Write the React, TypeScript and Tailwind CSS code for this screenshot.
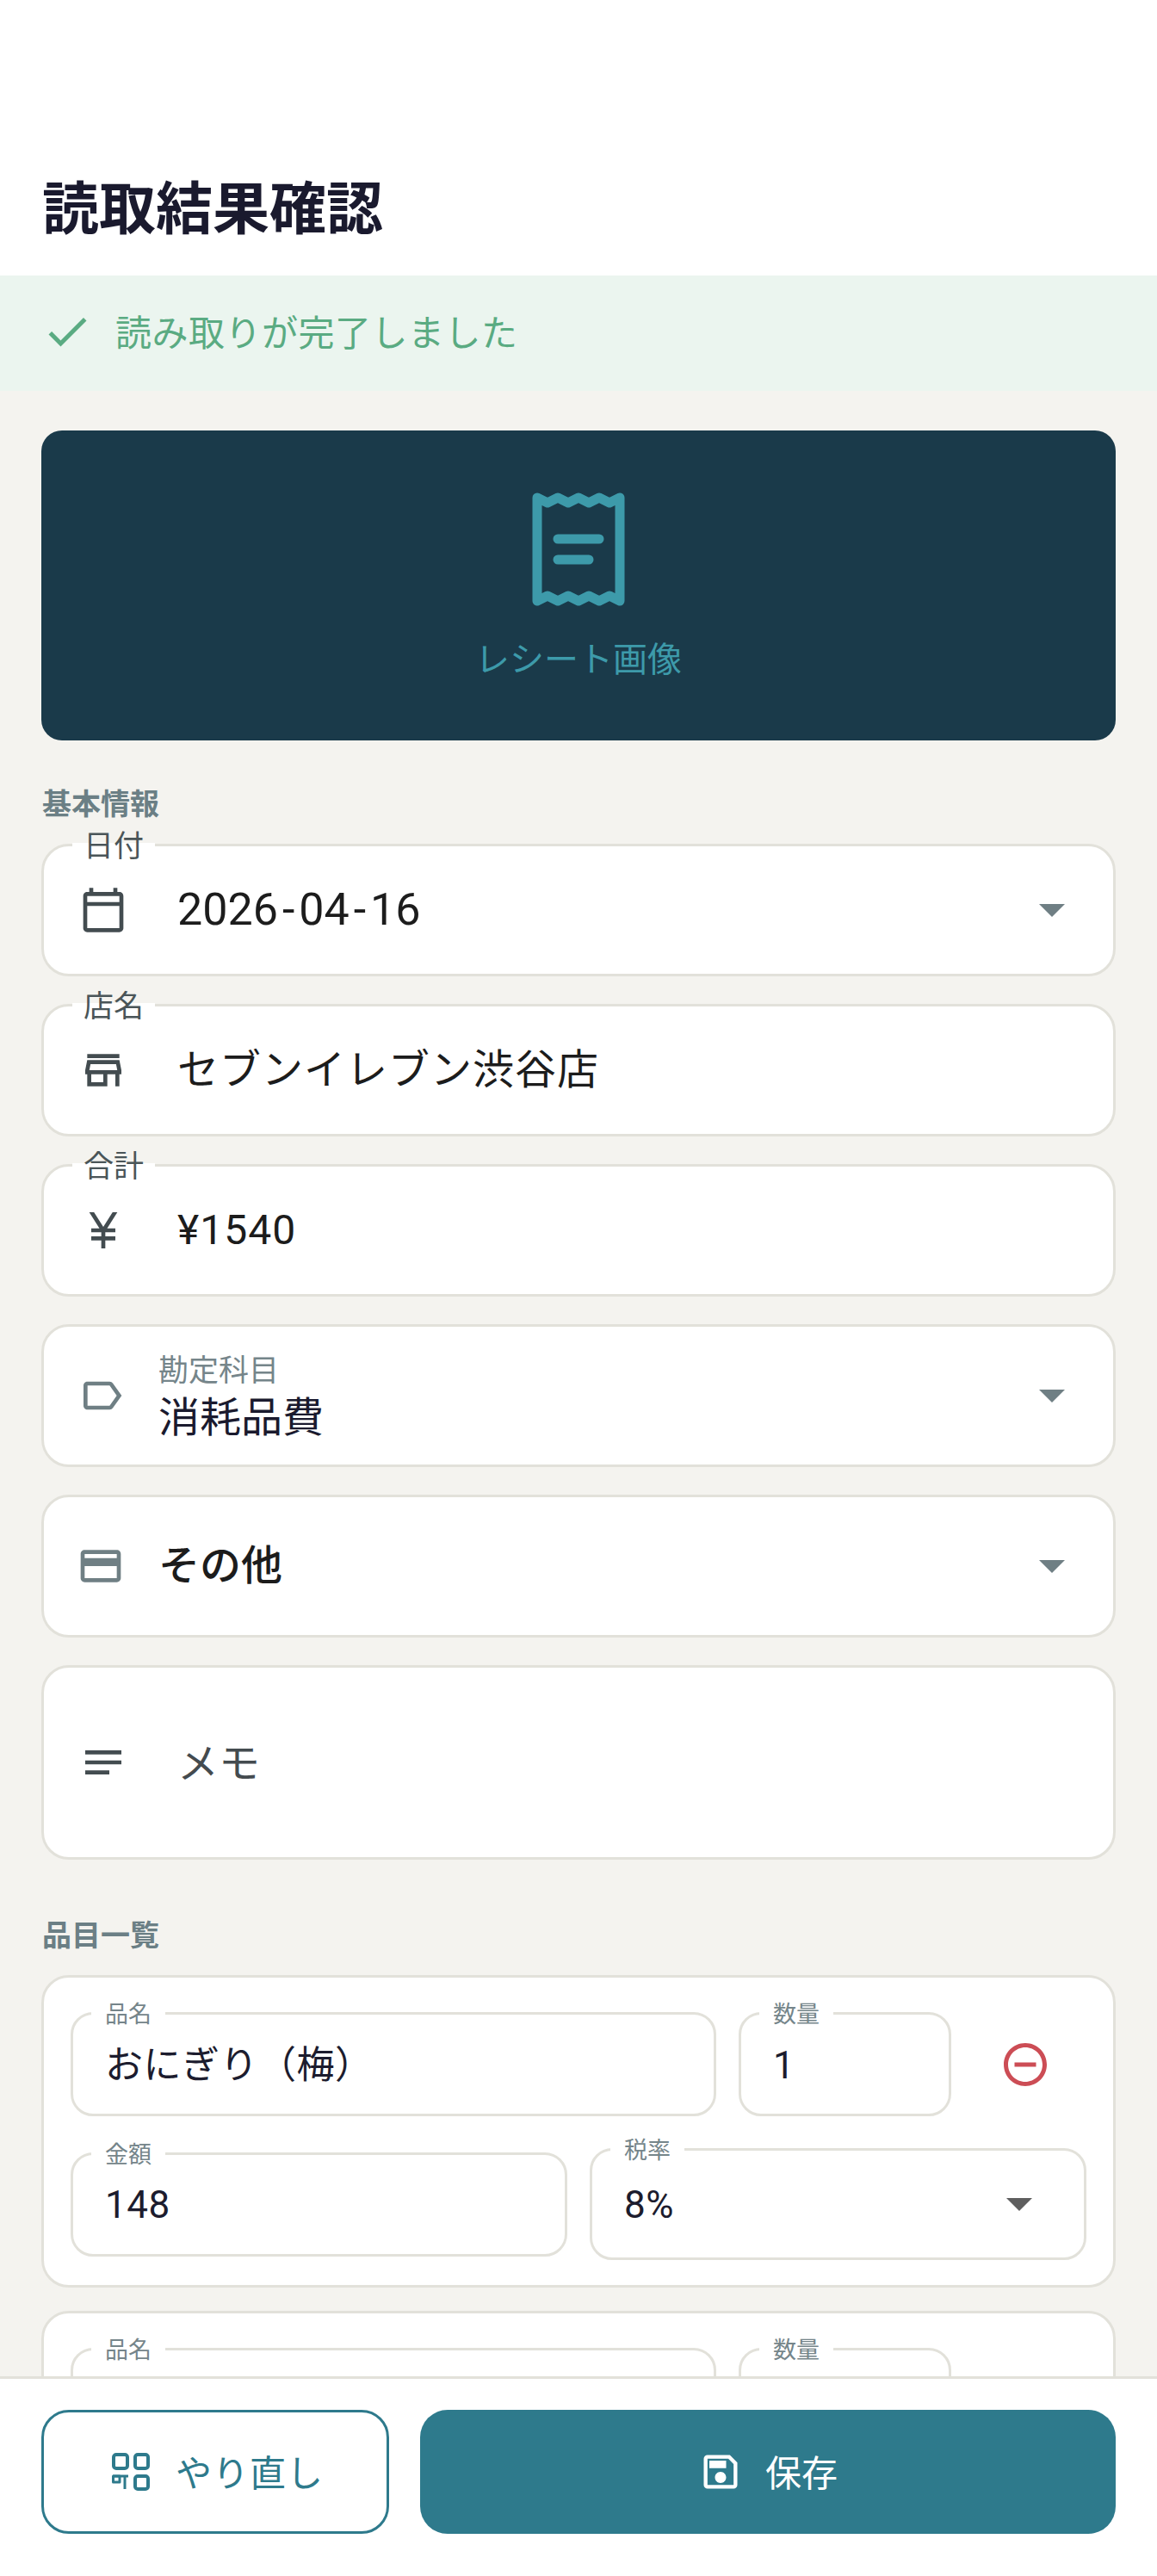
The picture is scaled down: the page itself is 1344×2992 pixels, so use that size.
import React from "react";
import {
  MdCheck,
  MdOutlineCalendarToday,
  MdOutlineStore,
  MdOutlineCurrencyYen,
  MdOutlineLabel,
  MdOutlineCreditCard,
  MdNotes,
  MdOutlineRemoveCircleOutline,
  MdOutlineSave,
} from "react-icons/md";

const Caret = ({ className }: { className: string }) => (
  <svg viewBox="0 0 30 15" className={className} fill="currentColor">
    <polygon points="0,0 30,0 15,15" />
  </svg>
);

const ReceiptIcon = () => (
  <svg viewBox="0 0 108 132" className="w-[108px] h-[132px] text-[#3d9aaa]" fill="none" stroke="currentColor" strokeWidth="11" strokeLinejoin="round" strokeLinecap="round">
    <path d="M6 6 L18 12 L30 6 L42 12 L54 6 L66 12 L78 6 L90 12 L102 6 V126 L90 120 L78 126 L66 120 L54 126 L42 120 L30 126 L18 120 L6 126 Z" />
    <path d="M30 54 H78" />
    <path d="M30 78 H66" />
  </svg>
);

const RetryIcon = () => (
  <svg viewBox="0 0 44 44" className="w-[44px] h-[44px]" fill="none" stroke="currentColor" strokeWidth="4" strokeLinejoin="round">
    <rect x="2" y="2" width="16" height="16" rx="3" />
    <rect x="27" y="2" width="15" height="16" rx="3" />
    <rect x="27" y="27" width="15" height="15" rx="3" />
    <path d="M1 27 H19 M15 27 V42" strokeWidth="3" />
    <rect x="1.5" y="27" width="7.5" height="7" strokeWidth="3" />
  </svg>
);

// outlined field with its label sitting on the top border
const Field = ({ label, icon, value, caret }: { label: string; icon: React.ReactNode; value: React.ReactNode; caret?: boolean }) => (
  <div className="relative h-[154px] rounded-[32px] border-[3px] border-[#e2e1da] bg-white flex items-center pl-[41px] pr-[56px]">
    <span className="absolute left-[33px] top-[-22px] h-[46px] px-[13px] flex items-center text-[35px] leading-[46px] text-[#4a5558] bg-[linear-gradient(to_bottom,transparent_40%,white_40%)]">
      {label}
    </span>
    <span className="w-[56px] flex justify-center text-[#434c50]">{icon}</span>
    <span className="ml-[58px] flex-1 text-[48px] tracking-[1px] text-[#1c1c1c]">{value}</span>
    {caret && <Caret className="w-[30px] h-[15px] text-[#6f7f84]" />}
  </div>
);

const SmallField = ({ label, value, className, caret }: { label: string; value: string; className: string; caret?: boolean }) => (
  <div className={`relative rounded-[26px] border-[3px] border-[#e2e1da] bg-white flex items-center pl-[37px] pr-[60px] ${className}`}>
    <span className="absolute left-[21px] top-[-18px] h-[36px] px-[16px] bg-white text-[27px] leading-[36px] text-[#75858a]">{label}</span>
    <span className="flex-1 pt-[2px] text-[44px] tracking-[0.5px] text-[#1c1c2e]">{value}</span>
    {caret && <Caret className="w-[30px] h-[15px] text-[#5f5f5f]" />}
  </div>
);

export default function App() {
  return (
    <div className="w-[1344px] h-[2992px] overflow-hidden flex flex-col bg-[#f4f3ef] font-['Roboto','Noto_Sans_CJK_JP',sans-serif]">
      <header className="h-[320px] shrink-0 bg-white flex items-end pb-[36px] pl-[49px]">
        <h1 className="text-[66px] leading-[80px] font-bold text-[#1a1a2e]">読取結果確認</h1>
      </header>

      <div className="h-[134px] shrink-0 bg-[#ebf5ef] flex items-center pl-[48px] text-[#5aab82]">
        <span className="-mt-[4px]"><MdCheck size={60} /></span>
        <span className="ml-[26px] text-[42px] tracking-[0.5px]">読み取りが完了しました</span>
      </div>

      <main className="flex-1 min-h-0 overflow-hidden px-[48px] pt-[46px]">
        <div className="h-[360px] rounded-[24px] bg-[#1a3a4a] flex flex-col items-center pt-[72px]">
          <ReceiptIcon />
          <span className="mt-[38px] text-[40px] leading-[50px] text-[#3d9aaa]">レシート画像</span>
        </div>

        <h2 className="mt-[52px] text-[34px] leading-[44px] font-bold text-[#6b7f85] pl-[1px]">基本情報</h2>

        <div className="mt-[24px] flex flex-col gap-[32px]">
          <Field
            label="日付"
            icon={<MdOutlineCalendarToday size={58} />}
            caret
            value={
              <span className="text-[52px] tracking-[0px]">
                2026<span className="mx-[5px]">-</span>04<span className="mx-[5px]">-</span>16
              </span>
            }
          />
          <Field label="店名" icon={<MdOutlineStore size={58} />} value="セブンイレブン渋谷店" />
          <Field label="合計" icon={<MdOutlineCurrencyYen size={62} />} value="¥1540" />

          <div className="h-[166px] rounded-[32px] border-[3px] border-[#e2e1da] bg-white flex items-center pl-[41px] pr-[56px]">
            <span className="w-[56px] flex justify-center text-[#6f7f84] -ml-[2px]"><MdOutlineLabel size={60} /></span>
            <div className="ml-[38px] flex-1 flex flex-col pt-[5px]">
              <span className="text-[35px] leading-[46px] text-[#75858a]">勘定科目</span>
              <span className="text-[48px] leading-[62px] text-[#1a1a2e]">消耗品費</span>
            </div>
            <Caret className="w-[30px] h-[15px] text-[#6f7f84]" />
          </div>

          <div className="h-[166px] rounded-[32px] border-[3px] border-[#e2e1da] bg-white flex items-center pl-[41px] pr-[56px]">
            <span className="w-[56px] flex justify-center text-[#6f7f84] -ml-[3px]"><MdOutlineCreditCard size={64} /></span>
            <span className="ml-[39px] flex-1 text-[48px] font-medium text-[#1c1c1c]">その他</span>
            <Caret className="w-[30px] h-[15px] text-[#6f7f84]" />
          </div>

          <div className="h-[226px] rounded-[32px] border-[3px] border-[#e2e1da] bg-white flex items-center pl-[41px]">
            <span className="w-[56px] flex justify-center text-[#434c50]"><MdNotes size={60} /></span>
            <span className="ml-[58px] pt-[3px] text-[48px] text-[#444b4f]">メモ</span>
          </div>
        </div>

        <h2 className="mt-[66px] text-[34px] leading-[44px] font-bold text-[#6b7f85] pl-[1px]">品目一覧</h2>

        <div className="mt-[24px] flex flex-col gap-[27px]">
          <div className="rounded-[32px] border-[3px] border-[#e2e1da] bg-white h-[363px] px-[31px] pt-[40px]">
            <div className="flex items-center gap-[26px]">
              <SmallField label="品名" value="おにぎり（梅）" className="h-[121px] w-[750px]" />
              <SmallField label="数量" value="1" className="h-[121px] w-[247px]" />
              <span className="ml-[30px] text-[#cc4d55]"><MdOutlineRemoveCircleOutline size={60} /></span>
            </div>
            <div className="mt-[37px] flex items-center gap-[26px]">
              <SmallField label="金額" value="148" className="h-[121px] w-[577px]" />
              <SmallField label="税率" value="8%" caret className="h-[130px] w-[577px]" />
            </div>
          </div>

          <div className="rounded-[32px] border-[3px] border-[#e2e1da] bg-white h-[363px] px-[31px] pt-[40px]">
            <div className="flex items-center gap-[26px]">
              <SmallField label="品名" value="" className="h-[121px] w-[750px]" />
              <SmallField label="数量" value="" className="h-[121px] w-[247px]" />
            </div>
          </div>
        </div>
      </main>

      <footer className="h-[232px] shrink-0 bg-white border-t-[3px] border-[#e2e1da] flex gap-[36px] px-[48px] pt-[36px]">
        <button className="w-[404px] h-[144px] rounded-[32px] border-[3px] border-[#2e7a8c] bg-white flex items-center justify-center gap-[30px] pl-[6px] text-[#2e7a8c]">
          <RetryIcon />
          <span className="text-[42px] tracking-[1px] pt-[4px]">やり直し</span>
        </button>
        <button className="flex-1 h-[144px] rounded-[32px] bg-[#2e7a8c] flex items-center justify-center gap-[26px] text-white">
          <MdOutlineSave size={52} />
          <span className="text-[42px] pt-[4px]">保存</span>
        </button>
      </footer>
    </div>
  );
}
